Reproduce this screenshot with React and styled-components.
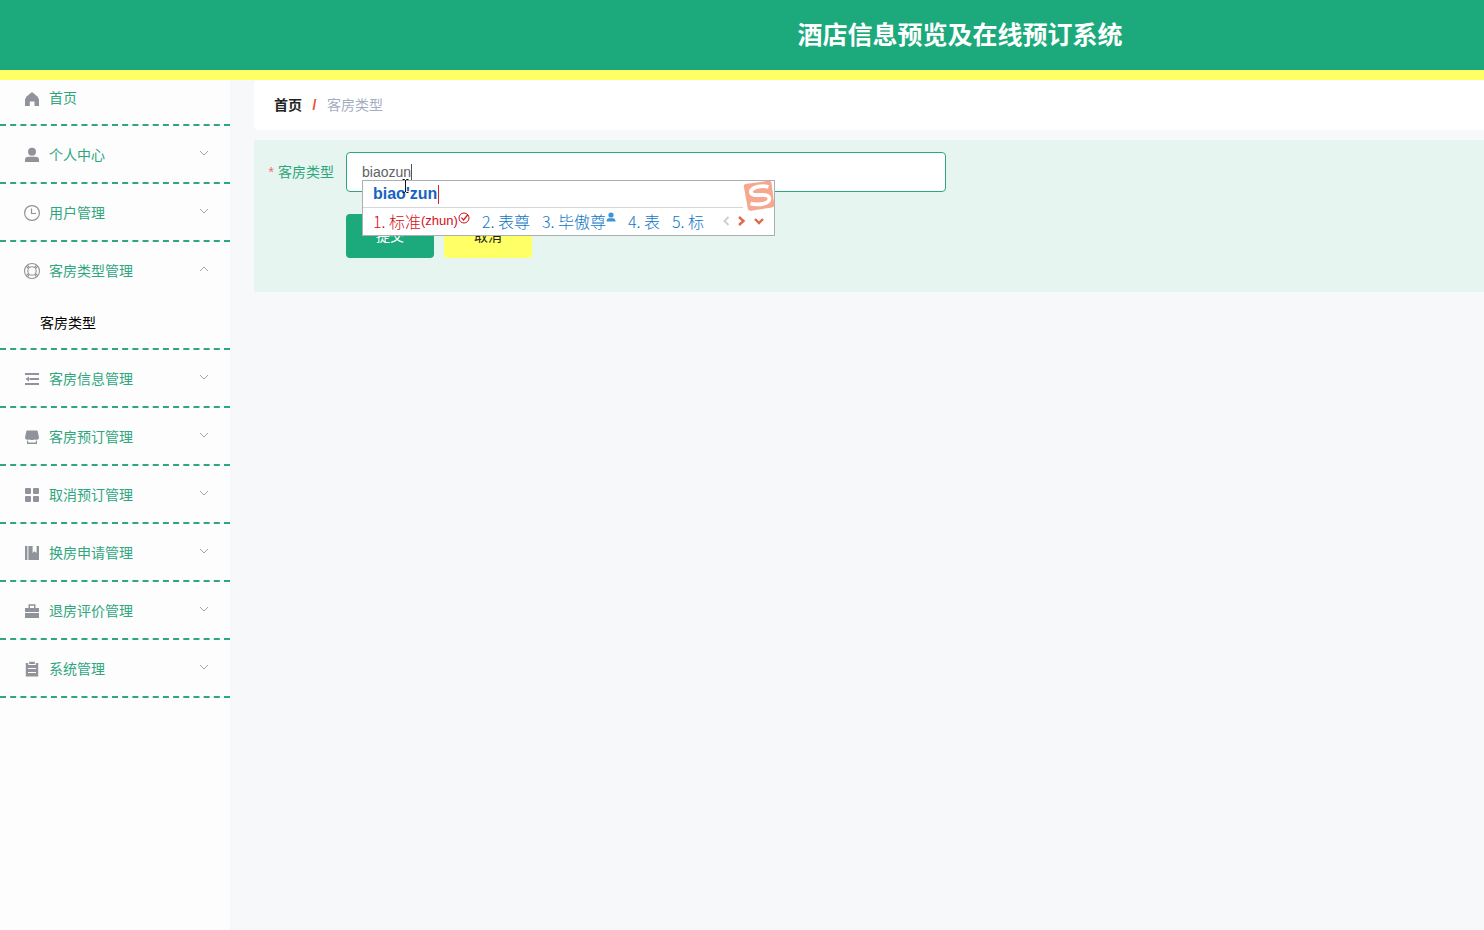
import React, { useState } from "react";
import styled, { createGlobalStyle } from "styled-components";

const GlobalStyle = createGlobalStyle`
  * {
    box-sizing: border-box;
  }
  body {
    margin: 0;
    background: #f6f8fa;
    font-family: "Liberation Sans", "Noto Sans CJK SC", sans-serif;
    font-size: 14px;
    line-height: 20px;
  }
`;

const Page = styled.div`
  min-height: 100vh;
  display: flex;
  flex-direction: column;
  overflow-x: hidden;
`;

const Header = styled.header`
  height: 80px;
  display: flex;
  align-items: center;
  justify-content: center;
  padding-left: 436px;
  background: #1ca97b;
  border-bottom: 10px solid #ffff66;
`;

const Title = styled.h1`
  margin: 0;
  font-size: 25px;
  line-height: 36px;
  font-weight: 700;
  color: #fff;
  white-space: nowrap;
`;

const Body = styled.div`
  flex: 1;
  display: flex;
  align-items: stretch;
`;

const Sidebar = styled.nav`
  flex: 0 0 230px;
  background: #fdfdfd;
`;

const Menu = styled.ul`
  list-style: none;
  margin: 0;
  padding: 0;
`;

const MenuGroup = styled.li`
  border-bottom: 2px dashed #2fa67d;
`;

const MenuButton = styled.button`
  width: 100%;
  height: ${(props) => (props.$first ? "44px" : "56px")};
  display: flex;
  align-items: center;
  padding: ${(props) => (props.$first ? "0 20px 8px" : "2px 20px 0")};
  border: 0;
  background: transparent;
  color: #2fa67d;
  font: inherit;
  text-align: left;
  cursor: pointer;
`;

const IconBox = styled.span`
  width: 24px;
  height: 18px;
  margin-right: 5px;
  display: flex;
  justify-content: center;
  color: #909399;
`;

const MenuLabel = styled.span`
  flex: 1;
`;

const Arrow = styled.svg`
  width: 12px;
  height: 12px;
  margin-bottom: 4px;
  fill: none;
  stroke: #a0a3a8;
  transform: ${(props) => (props.$open ? "rotate(180deg)" : "none")};
`;

const SubLink = styled.a`
  display: block;
  padding: 15px 40px;
  color: #000;
  text-decoration: none;
`;

const Main = styled.main`
  flex: 1;
  min-width: 0;
  padding-left: 24px;
`;

const Breadcrumb = styled.div`
  height: 50px;
  display: flex;
  align-items: center;
  padding: 0 20px;
  background: #fff;
  border-radius: 4px 0 0 4px;
`;

const HomeLink = styled.a`
  color: #222;
  font-weight: 700;
  text-decoration: none;
`;

const Slash = styled.span`
  width: 25px;
  text-align: center;
  color: #f04a2a;
  font-weight: 700;
`;

const Current = styled.span`
  color: #a3adc2;
`;

const Form = styled.form`
  margin-top: 10px;
  padding: 12px 12px 34px;
  background: #e6f5f0;
`;

const Field = styled.div`
  display: flex;
  align-items: center;
  margin-bottom: 22px;
`;

const Label = styled.label`
  width: 80px;
  padding-right: 12px;
  text-align: right;
  white-space: nowrap;
  color: #2fa67d;
`;

const Star = styled.span`
  margin-right: 4px;
  color: #f56c6c;
`;

const InputWrap = styled.div`
  position: relative;
  flex: 0 1 600px;
`;

const TextInput = styled.input`
  display: block;
  width: 100%;
  height: 40px;
  padding: 0 15px;
  border: 1px solid #2fa67d;
  border-radius: 4px;
  outline: 0;
  background: #fff;
  color: #606266;
  font: inherit;
`;

const Caret = styled.span`
  position: absolute;
  left: 65px;
  top: 12px;
  width: 1px;
  height: 16px;
  background: #555;
`;

const Pointer = styled.svg`
  position: absolute;
  z-index: 2;
  left: 56px;
  top: 26px;
`;

const Actions = styled.div`
  display: flex;
  gap: 10px;
  padding-left: 80px;
`;

const ActionButton = styled.button`
  width: 88px;
  height: 44px;
  border: 0;
  border-radius: 4px;
  background: ${(props) => (props.$primary ? "#1ca97b" : "#ffff66")};
  color: ${(props) => (props.$primary ? "#fff" : "#222")};
  font: inherit;
  cursor: pointer;
`;

const ImePanel = styled.div`
  position: absolute;
  z-index: 1;
  left: 16px;
  top: 28px;
  width: 413px;
  height: 56px;
  border: 1px solid #a9b0b4;
  background: #fff;
`;

const Composition = styled.div`
  display: flex;
  align-items: center;
  height: 27px;
  margin-right: 31px;
  padding-left: 10px;
  border-bottom: 1px solid #d4d6d8;
  color: #1763c2;
  font-size: 16px;
  font-weight: 700;
`;

const CompositionCaret = styled.span`
  height: 19px;
  margin-left: 1px;
  border-left: 1px solid #d8222c;
`;

const SogouLogo = styled.svg`
  position: absolute;
  right: -1px;
  top: -1px;
`;

const Candidates = styled.div`
  display: flex;
  align-items: center;
  height: 26px;
  padding-left: 10px;
`;

const CandidateList = styled.ol`
  display: flex;
  gap: 12px;
  margin: 0 18px 0 0;
  padding: 0;
  list-style: none;
  white-space: nowrap;
`;

const Candidate = styled.li`
  display: flex;
  align-items: center;
  color: ${(props) => (props.$active ? "#d30f1a" : "#0f76c4")};
  font-family: "Noto Sans CJK SC", sans-serif;
  font-size: 16px;
  font-weight: 300;
  line-height: 18px;
`;

const Index = styled.span`
  width: 16px;
`;

const Reading = styled.span`
  font-family: "Liberation Sans", sans-serif;
  font-size: 13px;
  font-weight: 400;
`;

const Badge = styled.svg`
  align-self: flex-start;
`;

const Pager = styled.div`
  display: flex;
  align-items: center;
  gap: 6px;
`;

const PagerButton = styled.button`
  display: flex;
  padding: 0;
  border: 0;
  background: transparent;
  color: ${(props) => (props.$off ? "#cfcfcf" : "#e0694a")};
`;

const icons = {
  home: <path d="M9 3 L15 8 V9.5 H16 V17 H11.5 V12.5 H6.8 V17 H2 V9.5 H3 V8 Z" fill="currentColor" />,
  user: (
    <g fill="currentColor">
      <circle cx="9" cy="5.8" r="4" />
      <path d="M2 16 V14 Q2 10.8 5.5 10.8 H12.5 Q16 10.8 16 14 V16 Z" />
    </g>
  ),
  clock: (
    <g fill="none" stroke="currentColor">
      <circle cx="9" cy="9" r="7.4" strokeWidth="1.2" />
      <path d="M8.5 4.5 V9.5 H13" strokeWidth="1.2" />
    </g>
  ),
  help: (
    <g fill="none" stroke="currentColor" strokeWidth="1.1">
      <circle cx="9" cy="9" r="7.5" />
      <circle cx="9" cy="9" r="4.2" />
      <path d="M4.4 3.1 L6.5 5.6 M3.1 4.4 L5.6 6.5 M13.6 3.1 L11.5 5.6 M14.9 4.4 L12.4 6.5 M4.4 14.9 L6.5 12.4 M3.1 13.6 L5.6 11.5 M13.6 14.9 L11.5 12.4 M14.9 13.6 L12.4 11.5" />
    </g>
  ),
  fold: (
    <g fill="currentColor">
      <path d="M2 3 H16 V5 H2 Z M6.5 8 H16 V10 H6.5 Z M2 13 H16 V15 H2 Z" />
      <path d="M2.5 9 L6 6.6 V11.4 Z" />
    </g>
  ),
  shop: (
    <g fill="currentColor">
      <path d="M3.5 2.5 H14.5 L16 9.5 Q16 11.8 13.8 11.8 Q12.5 11.8 11.5 11.4 Q10.3 12 9 12 Q7.7 12 6.5 11.4 Q5.5 11.8 4.2 11.8 Q2 11.8 2 9.5 Z" />
      <path d="M4 12.8 H5.2 V14.4 H12.8 V12.8 H14 V16 H4 Z" />
    </g>
  ),
  grid: (
    <g fill="currentColor">
      <rect x="2" y="2" width="6" height="6" rx="1" />
      <rect x="10" y="2" width="6" height="6" rx="1" />
      <rect x="2" y="10" width="6" height="6" rx="1" />
      <rect x="10" y="10" width="6" height="6" rx="1" />
    </g>
  ),
  book: <path d="M2 2 H4.4 V16 H2 Z M5.4 2 H9.6 V9 L11.6 7.2 L13.6 9 V2 H16 V16 H5.4 Z" fill="currentColor" />,
  briefcase: (
    <g fill="currentColor">
      <path d="M5.5 6 V2.2 H12.5 V6 H11 V3.7 H7 V6 Z" />
      <path d="M2 6 H16 V10 H2 Z M2 11 H16 V16 H2 Z" />
    </g>
  ),
  order: (
    <g>
      <path d="M2.8 3 H5.2 V5 H12.8 V3 H15.2 V16.5 H2.8 Z M6.2 1.8 H11.8 V4 H6.2 Z" fill="currentColor" />
      <path d="M5 8.5 H13 M5 12.5 H13" stroke="#fdfdfd" strokeWidth="1.2" />
    </g>
  ),
};

const menu = [
  { label: "首页", icon: "home" },
  { label: "个人中心", icon: "user", children: [] },
  { label: "用户管理", icon: "clock", children: [] },
  { label: "客房类型管理", icon: "help", children: ["客房类型"] },
  { label: "客房信息管理", icon: "fold", children: [] },
  { label: "客房预订管理", icon: "shop", children: [] },
  { label: "取消预订管理", icon: "grid", children: [] },
  { label: "换房申请管理", icon: "book", children: [] },
  { label: "退房评价管理", icon: "briefcase", children: [] },
  { label: "系统管理", icon: "order", children: [] },
];

const SideMenu = () => {
  const [open, setOpen] = useState("客房类型管理");
  return (
    <Sidebar>
      <Menu>
        {menu.map((item, i) => (
          <MenuGroup key={item.label}>
            <MenuButton
              type="button"
              $first={i === 0}
              onClick={() => setOpen(open === item.label ? "" : item.label)}
            >
              <IconBox>
                <svg width="18" height="18" viewBox="0 0 18 18">
                  {icons[item.icon]}
                </svg>
              </IconBox>
              <MenuLabel>{item.label}</MenuLabel>
              {item.children && (
                <Arrow viewBox="0 0 12 12" $open={open === item.label}>
                  <path d="M2 4 L6 8 L10 4" />
                </Arrow>
              )}
            </MenuButton>
            {open === item.label &&
              item.children &&
              item.children.map((child) => (
                <SubLink key={child} href="#">
                  {child}
                </SubLink>
              ))}
          </MenuGroup>
        ))}
      </Menu>
    </Sidebar>
  );
};

const Ime = () => (
  <ImePanel>
    <Composition>
      biao'zun
      <CompositionCaret />
    </Composition>
    <Candidates>
      <CandidateList>
        <Candidate $active>
          <Index>1.</Index>标准<Reading>(zhun)</Reading>
          <Badge width="12" height="12" viewBox="0 0 12 12" fill="none" stroke="currentColor">
            <circle cx="6" cy="6" r="5" />
            <path d="M3.5 5.5 L5.5 8 L10 2.5" strokeWidth="1.2" />
          </Badge>
        </Candidate>
        <Candidate>
          <Index>2.</Index>表尊
        </Candidate>
        <Candidate>
          <Index>3.</Index>毕傲尊
          <Badge width="10" height="10" viewBox="0 0 10 10" fill="#3d94d6">
            <circle cx="5" cy="3" r="2.6" />
            <path d="M0.5 9.5 Q0.5 6.5 3 6.2 H7 Q9.5 6.5 9.5 9.5 Z" />
          </Badge>
        </Candidate>
        <Candidate>
          <Index>4.</Index>表
        </Candidate>
        <Candidate>
          <Index>5.</Index>标
        </Candidate>
      </CandidateList>
      <Pager>
        <PagerButton type="button" aria-label="上一页" $off>
          <svg width="9" height="12" viewBox="0 0 9 12" fill="none" stroke="currentColor" strokeWidth="2">
            <path d="M6.5 2 L2.5 6 L6.5 10" />
          </svg>
        </PagerButton>
        <PagerButton type="button" aria-label="下一页">
          <svg width="9" height="12" viewBox="0 0 9 12" fill="none" stroke="currentColor" strokeWidth="2.4">
            <path d="M2 2 L6.5 6 L2 10" />
          </svg>
        </PagerButton>
        <PagerButton type="button" aria-label="展开">
          <svg width="14" height="12" viewBox="0 0 14 12" fill="none" stroke="currentColor" strokeWidth="2.4">
            <path d="M3 4 L7 8 L11 4" />
          </svg>
        </PagerButton>
      </Pager>
    </Candidates>
    <SogouLogo width="32" height="32" viewBox="0 0 32 32">
      <path d="M2.5 4 Q0.5 4.5 0.8 6.5 L4.8 28.5 Q5.3 31 8 30.7 L29 27.5 Q31.5 27 31.3 24.5 L28.5 3 Q28 0.5 25.5 0.8 Z" fill="#f5a78f" />
      <path
        d="M25.5 6.8 Q17 5 11 8 Q6.5 10.5 8.5 13.5 Q10 15.5 17 15 Q26 14.5 26.5 18.5 Q26.5 22.5 19.5 24 Q13 25 7.5 23.5"
        fill="none"
        stroke="#fff"
        strokeWidth="3.8"
      />
    </SogouLogo>
  </ImePanel>
);

const App = () => {
  const [value, setValue] = useState("biaozun");
  return (
    <>
      <GlobalStyle />
      <Page>
        <Header>
          <Title>酒店信息预览及在线预订系统</Title>
        </Header>
        <Body>
          <SideMenu />
          <Main>
            <Breadcrumb>
              <HomeLink href="#">首页</HomeLink>
              <Slash>/</Slash>
              <Current>客房类型</Current>
            </Breadcrumb>
            <Form onSubmit={(e) => e.preventDefault()}>
              <Field>
                <Label htmlFor="roomType">
                  <Star>*</Star>客房类型
                </Label>
                <InputWrap>
                  <TextInput
                    id="roomType"
                    type="text"
                    value={value}
                    onChange={(e) => setValue(e.target.value)}
                  />
                  <Caret />
                  <Ime />
                  <Pointer width="8" height="16" viewBox="0 0 8 16" fill="none" stroke="#111">
                    <path d="M0.5 1.5 H2.5 L3.5 2.5 L4.5 1.5 H6.5 M3.5 2 V14 M0.5 14.5 H2.5 L3.5 13.5 L4.5 14.5 H6.5" />
                  </Pointer>
                </InputWrap>
              </Field>
              <Actions>
                <ActionButton type="submit" $primary>
                  提交
                </ActionButton>
                <ActionButton type="button" onClick={() => setValue("")}>
                  取消
                </ActionButton>
              </Actions>
            </Form>
          </Main>
        </Body>
      </Page>
    </>
  );
};

export default App;
